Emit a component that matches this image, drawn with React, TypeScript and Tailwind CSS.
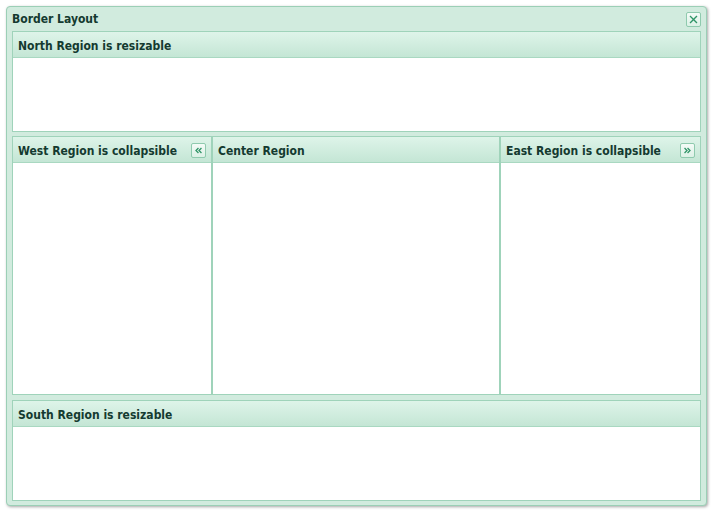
import React from "react";

const font = { fontFamily: '"DejaVu Sans Condensed", "DejaVu Sans", Verdana, sans-serif' };

function ToolBtn({ kind }: { kind: "close" | "left" | "right" }) {
  return (
    <div className="w-[15px] h-[15px] rounded-[2px] border border-[#8fcaae] bg-gradient-to-b from-[#f4fbf7] to-[#dcf1e6] flex items-center justify-center">
      <svg width="11" height="11" viewBox="0 0 11 11" fill="none" stroke="#2f9467" strokeWidth="1.3" strokeLinecap="square">
        {kind === "close" && (
          <>
            <path d="M2.5 2.5 L8.5 8.5" />
            <path d="M8.5 2.5 L2.5 8.5" />
          </>
        )}
        {kind === "left" && (
          <>
            <path d="M5 3.5 L3 5.5 L5 7.5" />
            <path d="M8 3.5 L6 5.5 L8 7.5" />
          </>
        )}
        {kind === "right" && (
          <>
            <path d="M3 3.5 L5 5.5 L3 7.5" />
            <path d="M6 3.5 L8 5.5 L6 7.5" />
          </>
        )}
      </svg>
    </div>
  );
}

function Header({ title, tool }: { title: string; tool?: "left" | "right" }) {
  return (
    <div className="h-[26px] shrink-0 flex items-center justify-between pl-[5px] pr-[5px] pt-[1px] border-b border-[#a9d8c1] bg-gradient-to-b from-[#def4e9] to-[#c4e6d5]">
      <span className="text-[12px] font-bold text-[#143a30] pt-[1px]" style={font}>
        {title}
      </span>
      {tool && <ToolBtn kind={tool} />}
    </div>
  );
}

export default function App() {
  return (
    <div className="w-[714px] h-[513px] bg-white p-[6px]">
      <div className="w-[701px] h-[500px] rounded-[4px] border border-[#9bcfb6] bg-[#d1ebde] shadow-[1px_1px_3px_rgba(0,0,0,0.35)] flex flex-col">
        <div className="h-[24px] shrink-0 flex items-center justify-between pl-[5px] pr-[5px]">
          <span className="text-[12px] font-bold text-[#143a30]" style={font}>
            Border Layout
          </span>
          <ToolBtn kind="close" />
        </div>
        <div className="flex-1 flex flex-col px-[5px] pb-[4px] gap-[4px]">
          <div className="h-[101px] shrink-0 border border-[#9fd3ba] flex flex-col bg-white">
            <Header title="North Region is resizable" />
            <div className="flex-1 bg-white" />
          </div>
          <div className="flex-1 flex">
            <div className="w-[200px] shrink-0 border border-[#9fd3ba] flex flex-col bg-white">
              <Header title="West Region is collapsible" tool="left" />
              <div className="flex-1" />
            </div>
            <div className="flex-1 border border-[#9fd3ba] flex flex-col bg-white">
              <Header title="Center Region" />
              <div className="flex-1" />
            </div>
            <div className="w-[201px] shrink-0 border border-[#9fd3ba] flex flex-col bg-white">
              <Header title="East Region is collapsible" tool="right" />
              <div className="flex-1" />
            </div>
          </div>
          <div className="h-[101px] shrink-0 border border-[#9fd3ba] flex flex-col bg-white mt-[1px]">
            <Header title="South Region is resizable" />
            <div className="flex-1 bg-white" />
          </div>
        </div>
      </div>
    </div>
  );
}
